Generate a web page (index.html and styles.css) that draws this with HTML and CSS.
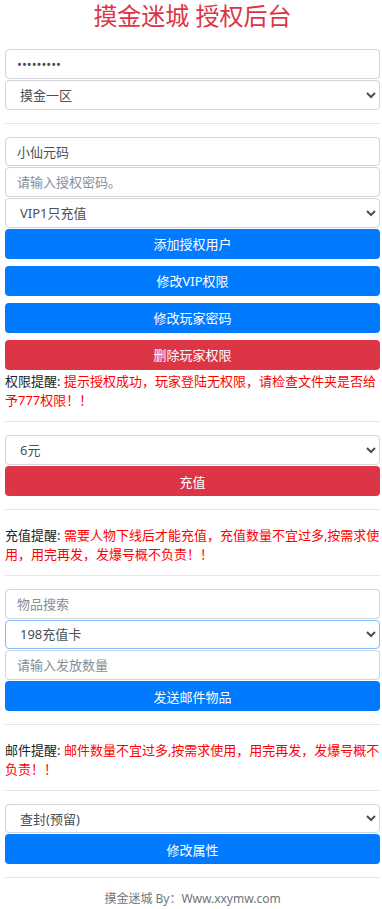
FILE: index.html
```html
<!DOCTYPE html>
<html lang="zh-CN">
<head>
<meta charset="utf-8">
<meta name="viewport" content="width=device-width, initial-scale=1">
<title>摸金迷城 授权后台</title>
<link rel="stylesheet" href="styles.css">
</head>
<body>
<div class="wrap">
  <h1 class="title">摸金迷城 授权后台</h1>

  <input class="field" type="password" value="123456789">
  <select class="field sel">
    <option>摸金一区</option>
  </select>

  <hr class="rule">

  <input class="field" type="text" value="小仙元码">
  <input class="field" type="text" placeholder="请输入授权密码。">
  <select class="field sel">
    <option>VIP1只充值</option>
  </select>
  <div class="btns">
    <button class="btn blue">添加授权用户</button>
    <button class="btn blue">修改VIP权限</button>
    <button class="btn blue">修改玩家密码</button>
    <button class="btn red">删除玩家权限</button>
  </div>
  <p class="note"><span class="label">权限提醒:</span> <span class="warn">提示授权成功，玩家登陆无权限，请检查文件夹是否给予777权限！！</span></p>

  <hr class="rule">

  <select class="field sel">
    <option>6元</option>
  </select>
  <button class="btn red">充值</button>

  <hr class="rule">

  <p class="note"><span class="label">充值提醒:</span> <span class="warn">需要人物下线后才能充值，充值数量不宜过多,按需求使用，用完再发，发爆号概不负责！！</span></p>

  <hr class="rule">

  <input class="field" type="text" placeholder="物品搜索">
  <select class="field sel focused">
    <option>198充值卡</option>
  </select>
  <input class="field" type="text" placeholder="请输入发放数量">
  <button class="btn blue">发送邮件物品</button>

  <hr class="rule">

  <p class="note"><span class="label">邮件提醒:</span> <span class="warn">邮件数量不宜过多,按需求使用，用完再发，发爆号概不负责！！</span></p>

  <hr class="rule">

  <select class="field sel">
    <option>查封(预留)</option>
  </select>
  <button class="btn blue">修改属性</button>

  <hr class="rule">

  <p class="footer">摸金迷城 By：Www.xxymw.com</p>
</div>
</body>
</html>
```

FILE: styles.css
```css
* {
  box-sizing: border-box;
}

html, body {
  margin: 0;
  padding: 0;
  background: #fff;
}

body {
  font-family: "Noto Sans", "Noto Sans CJK SC", sans-serif;
  font-size: 13px;
  color: #212529;
}

.wrap {
  padding: 0 2px 0 5px;
}

.title {
  margin: 0 0 17px;
  height: 32px;
  line-height: 32px;
  font-size: 24px;
  font-weight: normal;
  color: #dc3545;
  text-align: center;
}

.field {
  display: block;
  width: 100%;
  height: 29.8px;
  margin: 0 0 1px;
  padding: 0 11px;
  border: 1px solid #ced4da;
  border-radius: 4px;
  background: #fff;
  font-family: "Noto Sans", "Noto Sans CJK SC", sans-serif;
  font-size: 13px;
  color: #495057;
  outline: none;
}

.field::placeholder {
  color: #868e96;
}

.sel {
  padding-left: 10px;
}

.focused {
  border-color: #80bdff;
}

.btns {
  display: flex;
  flex-direction: column;
  gap: 7px;
}

.btn {
  display: block;
  width: 100%;
  height: 30px;
  padding: 0;
  border: none;
  border-radius: 4px;
  font-family: "Noto Sans", "Noto Sans CJK SC", sans-serif;
  font-size: 13px;
  color: #fff;
}

.blue {
  background: #007bff;
}

.red {
  background: #dc3545;
}

.rule {
  margin: 13px 0;
  border: 0;
  border-top: 1px solid #e5e5e5;
  height: 0;
}

.note {
  margin: 0 0 -2px;
  padding-top: 2.5px;
  line-height: 19px;
}

.label {
  color: #212529;
}

.warn {
  color: #ff0000;
}

.footer {
  margin: 0;
  line-height: 16px;
  font-size: 12px;
  color: #6c757d;
  text-align: center;
}
```
